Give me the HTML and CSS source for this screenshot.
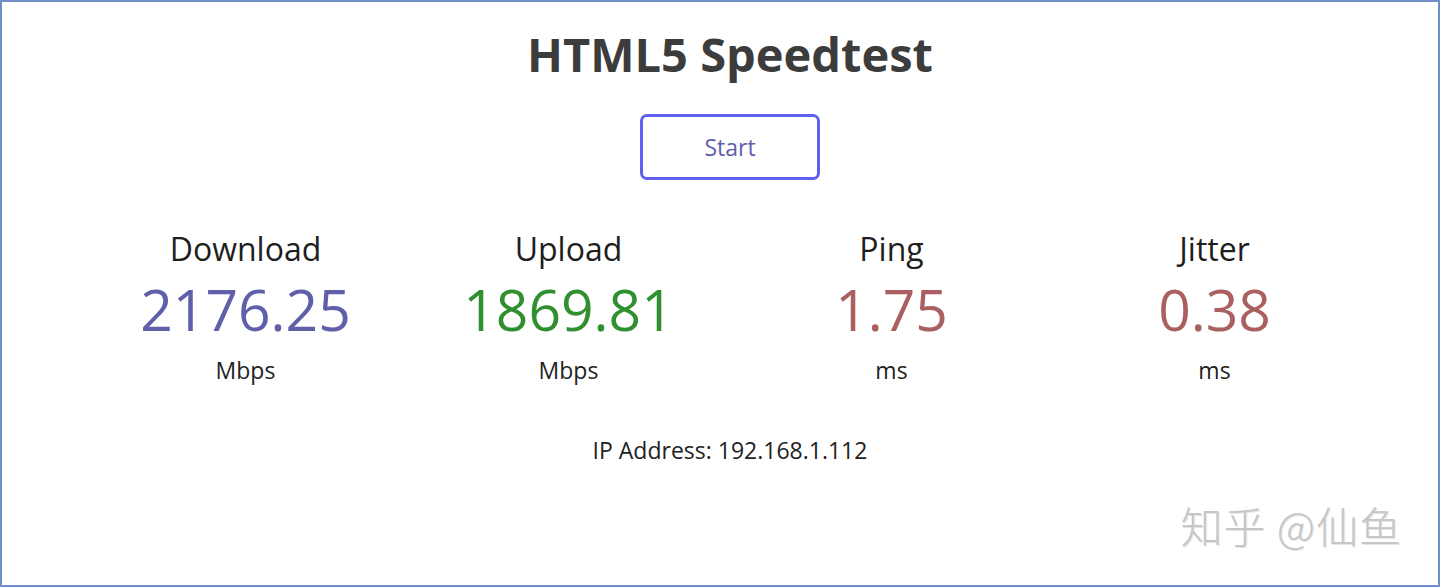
FILE: index.html
```html
<!DOCTYPE html>
<html lang="en">
<head>
<meta charset="utf-8">
<title>HTML5 Speedtest</title>
<link rel="stylesheet" href="styles.css">
</head>
<body>
<div class="frame">
  <main class="page">
    <h1 class="title">HTML5 Speedtest</h1>
    <button class="start-btn" type="button">Start</button>
    <section class="meters">
      <div class="meter">
        <div class="meter-name">Download</div>
        <div class="meter-value dl">2176.25</div>
        <div class="meter-unit">Mbps</div>
      </div>
      <div class="meter">
        <div class="meter-name">Upload</div>
        <div class="meter-value ul">1869.81</div>
        <div class="meter-unit">Mbps</div>
      </div>
      <div class="meter">
        <div class="meter-name">Ping</div>
        <div class="meter-value pj">1.75</div>
        <div class="meter-unit">ms</div>
      </div>
      <div class="meter">
        <div class="meter-name">Jitter</div>
        <div class="meter-value pj">0.38</div>
        <div class="meter-unit">ms</div>
      </div>
    </section>
    <div class="ip">IP Address: 192.168.1.112</div>
  </main>
  <div class="watermark">知乎 @仙鱼</div>
</div>
</body>
</html>
```

FILE: styles.css
```css
html, body {
  margin: 0;
  padding: 0;
  background: #ffffff;
}

body {
  font-family: "Open Sans", "Noto Sans", "Noto Sans CJK SC", sans-serif;
  color: #202020;
}

.frame {
  position: relative;
  width: 1440px;
  height: 587px;
  box-sizing: border-box;
  border: 2px solid #7090c8;
  overflow: hidden;
}

.page {
  display: flex;
  flex-direction: column;
  align-items: center;
  padding-left: 20px;
}

.title {
  margin: 22px 0 0;
  font-size: 47px;
  line-height: 60px;
  font-weight: 700;
  color: #3c3c3c;
}

.start-btn {
  margin-top: 30px;
  width: 180px;
  height: 66px;
  box-sizing: border-box;
  border: 3px solid #6060f0;
  border-radius: 7px;
  background: #ffffff;
  color: #6060aa;
  font-family: inherit;
  font-size: 23px;
  padding: 0;
}

.meters {
  margin-top: 47px;
  display: grid;
  grid-template-columns: repeat(4, 323px);
}

.meter {
  display: flex;
  flex-direction: column;
  align-items: center;
}

.meter-name {
  font-size: 32px;
  line-height: 44px;
  color: #1e1e1e;
}

.meter-value {
  font-size: 57px;
  line-height: 76px;
}

.dl { color: #6060aa; }
.ul { color: #309030; }
.pj { color: #aa6060; }

.meter-unit {
  margin-top: 7px;
  font-size: 23px;
  line-height: 32px;
  color: #222222;
}

.ip {
  margin-top: 48px;
  font-size: 23px;
  line-height: 32px;
  color: #222222;
}

.watermark {
  position: absolute;
  right: 36px;
  bottom: 36px;
  font-family: "Noto Sans CJK SC", sans-serif;
  font-weight: 300;
  font-size: 42px;
  line-height: 48px;
  letter-spacing: 1px;
  color: #c6c6c6;
  text-shadow: 1px 1px 0 #e4e4e4;
}
```
